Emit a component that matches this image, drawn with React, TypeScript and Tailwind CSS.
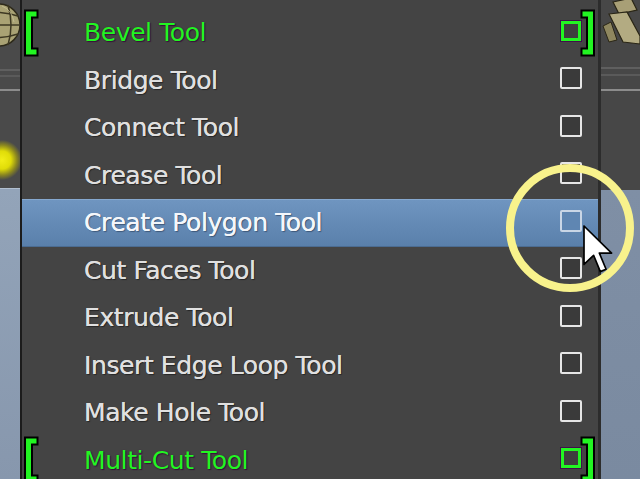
import React from "react";

const items: { label: string; green?: boolean; active?: boolean }[] = [
  { label: "Bevel Tool", green: true },
  { label: "Bridge Tool" },
  { label: "Connect Tool" },
  { label: "Crease Tool" },
  { label: "Create Polygon Tool", active: true },
  { label: "Cut Faces Tool" },
  { label: "Extrude Tool" },
  { label: "Insert Edge Loop Tool" },
  { label: "Make Hole Tool" },
  { label: "Multi-Cut Tool", green: true },
];

function Bracket({ side }: { side: "left" | "right" }) {
  const d = side === "left" ? "M12 5 H6.5 V43 H12" : "M6 5 H11.5 V43 H6";
  return (
    <svg width="18" height="48" viewBox="0 0 18 48" className="shrink-0">
      <path d={d} fill="none" stroke="#000" strokeWidth="9" strokeLinecap="square" strokeLinejoin="miter" />
      <path d={d} fill="none" stroke="#22f522" strokeWidth="5" strokeLinecap="square" strokeLinejoin="miter" />
    </svg>
  );
}

function Row({ label, green, active }: { label: string; green?: boolean; active?: boolean }) {
  return (
    <div
      className={
        "h-[47.5px] flex items-center shrink-0 " +
        (active
          ? "bg-gradient-to-b from-[#6f95c0] to-[#5a80ab] border-t border-[#86a9d0] border-b border-b-[#4b6c92]"
          : "")
      }
    >
      <div className="w-[62px] h-full flex items-center">
        {green ? <Bracket side="left" /> : null}
      </div>
      <div
        className={
          "flex-1 text-[25px] leading-none tracking-[-0.4px] font-['DejaVu_Sans',sans-serif] " +
          (green
            ? "text-[#22f522] [text-shadow:0_0_1px_#3a103a,1px_1px_1px_#3a103a]"
            : active
            ? "text-[#f4f7fb] [text-shadow:0_0_0.6px_#ffffff,1px_1px_1px_rgba(20,30,50,0.45)]"
            : "text-[#e0e0e0] [text-shadow:0_0_0.6px_#e0e0e0,1px_1px_1px_rgba(0,0,0,0.45)]")
        }
      >
        {label}
      </div>
      <div className="w-[38px] h-full flex items-center">
        {green ? (
          <div className="w-[22px] h-[22px] mb-[4px] flex items-center justify-center">
            <div className="w-[20px] h-[20px] border-[3px] border-[#22f522] bg-[#3e3e3e] outline outline-1 outline-[#40104a]" />
          </div>
        ) : (
          <div
            className={
              "w-[22px] h-[22px] mb-[4px] rounded-[2px] border-[2.5px] " +
              (active ? "border-[#c9d6e6] bg-[#5f86b2]" : "border-[#e6e6e6] bg-[#3a3a3a]")
            }
          />
        )}
        {green ? (
          <div className="-ml-[3px]">
            <Bracket side="right" />
          </div>
        ) : null}
      </div>
    </div>
  );
}

export default function App() {
  return (
    <div className="relative w-[640px] h-[479px] overflow-hidden flex bg-[#3c3c3c]">
      {/* left strip */}
      <div className="w-[20px] h-full flex flex-col shrink-0">
        <div className="h-[188px] flex flex-col bg-[radial-gradient(circle_at_2px_160px,#f2ee18_0px,#e0dc08_9px,#8a8620_15px,#4a4a4a_20px)] bg-[#4a4a4a]">
          <svg width="20" height="56" viewBox="0 0 20 56" className="shrink-0">
            <circle cx="-1" cy="25" r="21" fill="#a9a274" stroke="#2e2a1a" strokeWidth="1.5" />
            <path d="M-20 14 Q0 10 18 16 M-21 25 H20 M-20 36 Q0 40 18 34" fill="none" stroke="#3d3822" strokeWidth="1.5" />
            <path d="M8 5 Q14 25 8 45" fill="none" stroke="#3d3822" strokeWidth="1.5" />
            <path d="M2 6 Q12 10 14 22" fill="none" stroke="#d2cca2" strokeWidth="1" opacity="0.6" />
          </svg>
          <div className="mt-[13px] h-[2px] bg-[#5f5f5f]" />
          <div className="mt-[4px] h-[2px] bg-[#5a5a5a]" />
          <div className="mt-[12px] h-[2px] bg-[#8c8c8c]" />
        </div>
        <div className="flex-1 bg-gradient-to-b from-[#93a4b9] to-[#8797ad] border-t border-[#b2c0d0]" />
      </div>
      <div className="w-[2px] h-full bg-[#1c1c1c] shrink-0" />

      {/* menu panel */}
      <div className="w-[576px] h-full bg-[#444444] pt-[9px] flex flex-col shrink-0">
        {items.map((it) => (
          <Row key={it.label} {...it} />
        ))}
      </div>

      {/* right strip */}
      <div className="w-[3px] h-full bg-[#2c2c2c] shrink-0" />
      <div className="flex-1 h-full flex flex-col">
        <div className="h-[190px] bg-[#474747] flex flex-col">
          <svg width="39" height="50" viewBox="0 0 39 50" className="shrink-0">
            <path d="M12 2 L30 -2 L36 10 L18 14 Z" fill="#a89f76" stroke="#2a2616" strokeWidth="1.2" />
            <path d="M8 14 L26 12 L39 36 L39 44 L22 42 Z" fill="#b3ab82" stroke="#2a2616" strokeWidth="1.2" />
            <path d="M2 26 L10 22 L16 40 L8 42 Z" fill="#8f875f" stroke="#2a2616" strokeWidth="1" />
          </svg>
          <div className="mt-[17px] h-[2px] bg-[#5f5f5f]" />
          <div className="mt-[5px] h-[2px] bg-[#5a5a5a]" />
          <div className="mt-[13px] h-[2px] bg-[#8c8c8c]" />
        </div>
        <div className="flex-1 bg-gradient-to-b from-[#7f8fa5] to-[#7a8aa0]" />
      </div>

      {/* annotation circle */}
      <svg
        className="absolute left-[502px] top-[160px] pointer-events-none"
        width="136"
        height="136"
        viewBox="0 0 136 136"
      >
        <circle cx="68" cy="68" r="60" fill="none" stroke="#f8f28c" strokeWidth="8" />
      </svg>

      {/* cursor */}
      <svg
        className="absolute left-[582px] top-[224px] pointer-events-none"
        width="32"
        height="52"
        viewBox="0 0 32 52"
      >
        <g transform="translate(2 2) scale(2.4)">
          <path
            d="M0 0 L0 16 L4 12.2 L6.8 19 L9.2 18 L6.4 11.3 L11.5 11.3 Z"
            fill="#ffffff"
            stroke="#000000"
            strokeWidth="0.7"
            strokeLinejoin="round"
          />
        </g>
      </svg>
    </div>
  );
}
